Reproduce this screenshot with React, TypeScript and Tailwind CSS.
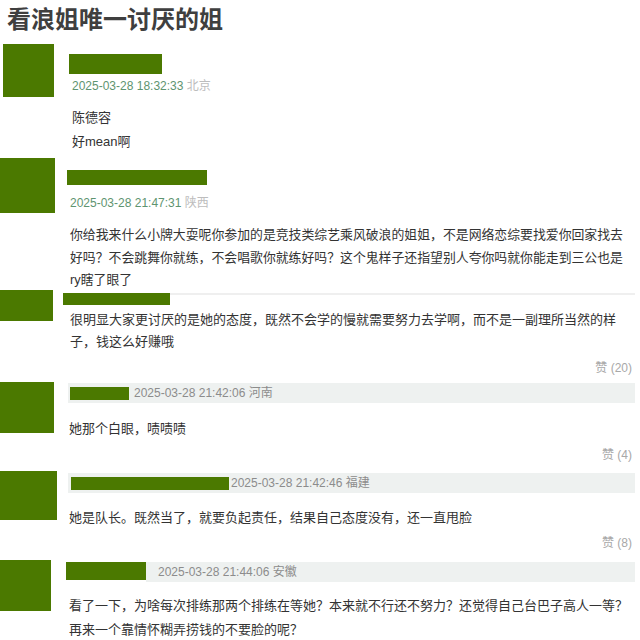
import React from 'react';

const font = { fontFamily: '"Liberation Sans", "Noto Sans CJK SC", sans-serif' };

function Avatar({ className }: { className: string }) {
  return <div className={`shrink-0 bg-[#4b7900] ${className}`} />;
}

function Likes({ children, className }: { children: React.ReactNode; className: string }) {
  return <div className={`text-right text-[12px] leading-[16px] text-[#a8a8a8] ${className}`}>{children}</div>;
}

export default function App() {
  return (
    <div className="h-[640px] w-[640px] overflow-hidden bg-white text-[#333]" style={font}>
      <div className="h-[40px] pl-[7px] pt-[5px] text-[24px] font-bold leading-[30px] text-[#3f3f3f]">
        看浪姐唯一讨厌的姐
      </div>

      {/* 1 */}
      <div className="flex h-[118px]">
        <Avatar className="ml-[3px] mt-[4px] h-[53px] w-[51px]" />
        <div className="ml-[15px]">
          <div className="mt-[14px] h-[20px] w-[93px] bg-[#4b7900]" />
          <div className="mt-[3px] pl-[3px] text-[12px] leading-[18px] text-[#5e9470]">
            2025-03-28 18:32:33 <span className="text-[#bdbdbd]">北京</span>
          </div>
          <div className="mt-[11px] pl-[3px] text-[13px] leading-[24px]">
            <div>陈德容</div>
            <div>好mean啊</div>
          </div>
        </div>
      </div>

      {/* 2 */}
      <div className="flex h-[132px]">
        <Avatar className="h-[55px] w-[55px]" />
        <div className="ml-[12px]">
          <div className="mt-[12px] h-[15px] w-[140px] bg-[#4b7900]" />
          <div className="mt-[9px] pl-[3px] text-[12px] leading-[18px] text-[#5e9470]">
            2025-03-28 21:47:31 <span className="text-[#bdbdbd]">陕西</span>
          </div>
          <div className="mt-[12px] whitespace-nowrap pl-[3px] text-[12.86px] leading-[22.5px]">
            <div>你给我来什么小牌大耍呢你参加的是竞技类综艺乘风破浪的姐姐，不是网络恋综要找爱你回家找去</div>
            <div>好吗？不会跳舞你就练，不会唱歌你就练好吗？这个鬼样子还指望别人夸你吗就你能走到三公也是</div>
            <div>ry瞎了眼了</div>
          </div>
        </div>
      </div>

      {/* 3 */}
      <div className="flex h-[90px]">
        <Avatar className="h-[31px] w-[53px]" />
        <div className="ml-[10px] mr-[5px] flex-1">
          <div className="mt-[3px] flex">
            <div className="h-[12px] w-[107px] bg-[#4b7900]" />
            <div className="h-[2px] flex-1 bg-[#efefef]" />
          </div>
          <div className="mt-[4px] whitespace-nowrap pl-[7px] text-[13px] leading-[22px]">
            <div>很明显大家更讨厌的是她的态度，既然不会学的慢就需要努力去学啊，而不是一副理所当然的样</div>
            <div>子，钱这么好赚哦</div>
          </div>
          <Likes className="mt-[7px] pr-[3px]">赞 (20)</Likes>
        </div>
      </div>

      {/* 4 */}
      <div className="flex h-[90px]">
        <Avatar className="mt-[2px] h-[51px] w-[54px]" />
        <div className="ml-[14px] mr-[5px] flex-1">
          <div className="mt-[3px] flex h-[20px] items-center bg-[#eef1f0]">
            <div className="ml-[2px] h-[13px] w-[59px] bg-[#4b7900]" />
            <div className="ml-[5px] text-[12px] text-[#8c8c8c]">2025-03-28 21:42:06 河南</div>
          </div>
          <div className="mt-[15px] pl-[1px] text-[13px] leading-[22px]">她那个白眼，啧啧啧</div>
          <Likes className="mt-[7px] pr-[3px]">赞 (4)</Likes>
        </div>
      </div>

      {/* 5 */}
      <div className="flex h-[90px]">
        <Avatar className="mt-[1px] h-[49px] w-[57px]" />
        <div className="ml-[11px] mr-[5px] flex-1">
          <div className="mt-[3px] flex h-[20px] items-center bg-[#eef1f0]">
            <div className="ml-[3px] mt-[1px] h-[13px] w-[158px] bg-[#4b7900]" />
            <div className="ml-[2px] text-[12px] text-[#8c8c8c]">2025-03-28 21:42:46 福建</div>
          </div>
          <div className="mt-[14px] pl-[1px] text-[13px] leading-[22px]">
            她是队长。既然当了，就要负起责任，结果自己态度没有，还一直甩脸
          </div>
          <Likes className="mt-[6px] pr-[3px]">赞 (8)</Likes>
        </div>
      </div>

      {/* 6 */}
      <div className="flex h-[80px]">
        <Avatar className="h-[51px] w-[51px]" />
        <div className="ml-[15px] mr-[5px] flex-1">
          <div className="mt-[2px] flex h-[20px]">
            <div className="h-[18px] w-[80px] bg-[#4b7900]" />
            <div className="flex flex-1 items-center bg-[#eef1f0] pl-[12px] text-[12px] text-[#8c8c8c]">
              2025-03-28 21:44:06 安徽
            </div>
          </div>
          <div className="mt-[12px] whitespace-nowrap pl-[3px] text-[13px] leading-[24px]">
            <div>看了一下，为啥每次排练那两个排练在等她？本来就不行还不努力？还觉得自己台巴子高人一等？</div>
            <div>再来一个靠情怀糊弄捞钱的不要脸的呢？</div>
          </div>
        </div>
      </div>
    </div>
  );
}
